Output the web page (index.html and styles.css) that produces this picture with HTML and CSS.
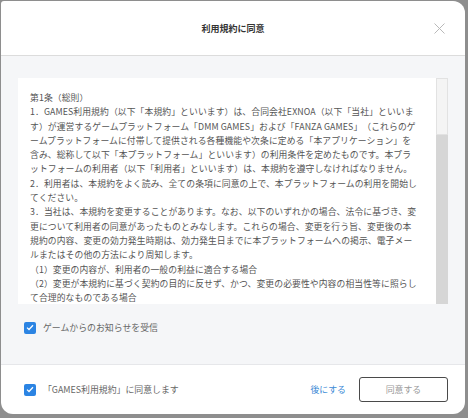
FILE: index.html
```html
<!DOCTYPE html>
<html lang="ja">
<head>
<meta charset="utf-8">
<title>利用規約に同意</title>
<link rel="stylesheet" href="styles.css">
</head>
<body>
<div class="dialog">
  <header class="dialog-header">
    <h1 class="dialog-title">利用規約に同意</h1>
    <button class="close-btn" aria-label="閉じる">
      <svg width="11" height="11" viewBox="0 0 11 11"><path d="M0.5 0.5 L10.5 10.5 M10.5 0.5 L0.5 10.5" stroke="#b9b9b9" stroke-width="1" fill="none"/></svg>
    </button>
  </header>
  <section class="dialog-body">
    <div class="terms-box">
      <div class="terms-text">
        <p>第1条（総則）</p>
        <p>1．GAMES利用規約（以下「本規約」といいます）は、合同会社EXNOA（以下「当社」といいま<br>す）が運営するゲームプラットフォーム「DMM GAMES」および「FANZA GAMES」（これらのゲ<br>ームプラットフォームに付帯して提供される各種機能や次条に定める「本アプリケーション」を<br>含み、総称して以下「本プラットフォーム」といいます）の利用条件を定めたものです。本プラ<br>ットフォームの利用者（以下「利用者」といいます）は、本規約を遵守しなければなりません。</p>
        <p>2．利用者は、本規約をよく読み、全ての条項に同意の上で、本プラットフォームの利用を開始し<br>てください。</p>
        <p>3．当社は、本規約を変更することがあります。なお、以下のいずれかの場合、法令に基づき、変<br>更について利用者の同意があったものとみなします。これらの場合、変更を行う旨、変更後の本<br>規約の内容、変更の効力発生時期は、効力発生日までに本プラットフォームへの掲示、電子メー<br>ルまたはその他の方法により周知します。</p>
        <p>（1）変更の内容が、利用者の一般の利益に適合する場合</p>
        <p>（2）変更が本規約に基づく契約の目的に反せず、かつ、変更の必要性や内容の相当性等に照らし<br>て合理的なものである場合</p>
      </div>
      <div class="scrollbar"><div class="scroll-thumb"></div></div>
    </div>
    <label class="check-row">
      <span class="checkbox"><svg width="8" height="7" viewBox="0 0 8 7"><path d="M1 3.6 L3 5.5 L7 1.3" stroke="#fff" stroke-width="1.3" fill="none"/></svg></span>
      <span class="check-label">ゲームからのお知らせを受信</span>
    </label>
  </section>
  <footer class="dialog-footer">
    <label class="check-row">
      <span class="checkbox"><svg width="8" height="7" viewBox="0 0 8 7"><path d="M1 3.6 L3 5.5 L7 1.3" stroke="#fff" stroke-width="1.3" fill="none"/></svg></span>
      <span class="check-label agree-label">「GAMES利用規約」に同意します</span>
    </label>
    <div class="actions">
      <a class="later-link">後にする</a>
      <button class="agree-btn">同意する</button>
    </div>
  </footer>
</div>
</body>
</html>
```

FILE: styles.css
```css
html, body {
  margin: 0;
  padding: 0;
}
body {
  width: 468px;
  height: 418px;
  background: #8e8e8e;
  font-family: "Noto Sans CJK JP", "Noto Sans", sans-serif;
  overflow: hidden;
}
.dialog {
  margin: 1px 0 0 1px;
  width: 464px;
  height: 413px;
  background: #fff;
  border-radius: 3px 12px 12px 12px;
  display: flex;
  flex-direction: column;
  overflow: hidden;
}
.dialog-header {
  height: 54px;
  flex: none;
  border-bottom: 1px solid #dcdcdc;
  display: flex;
  align-items: center;
  justify-content: center;
  position: relative;
}
.dialog-title {
  margin: 0;
  font-size: 9px;
  font-weight: 700;
  color: #333;
}
.close-btn {
  position: absolute;
  right: 20px;
  top: 22px;
  width: 11px;
  height: 11px;
  padding: 0;
  border: 0;
  background: none;
  display: flex;
}
.dialog-body {
  flex: 1;
  background: #f5f6f8;
  border-bottom: 1px solid #e6e7ea;
  padding: 22px 17px 0 17px;
  display: flex;
  flex-direction: column;
}
.terms-box {
  height: 226px;
  background: #fff;
  display: flex;
}
.terms-text {
  flex: 1;
  overflow: hidden;
  padding: 13px 12px 0 12px;
  font-size: 8.8px;
  line-height: 14.3px;
  color: #555;
  white-space: nowrap;
  text-spacing-trim: space-all;
  letter-spacing: 0.1px;
}
.terms-text p {
  margin: 0;
}
.scrollbar {
  width: 12px;
  flex: none;
  background: #d6d6d6;
}
.scroll-thumb {
  height: 57px;
  background: #f4f4f4;
  border: 1px solid #e2e2e2;
  box-sizing: border-box;
}
.check-row {
  display: flex;
  align-items: center;
  gap: 7px;
}
.dialog-body .check-row {
  margin: 17px 0 0 6px;
}
.checkbox {
  width: 12px;
  height: 12px;
  border-radius: 2px;
  background: #2b84e3;
  display: flex;
  align-items: center;
  justify-content: center;
  flex: none;
}
.check-label {
  font-size: 8.9px;
  color: #666;
}
.dialog-footer {
  height: 49px;
  flex: none;
  display: flex;
  align-items: center;
  justify-content: space-between;
  padding: 0 17px 0 23px;
}
.actions {
  display: flex;
  align-items: center;
  gap: 13px;
}
.later-link {
  font-size: 8.9px;
  color: #3b8ad6;
}
.agree-btn {
  width: 89px;
  height: 25px;
  border: 1px solid #4a4a4a;
  border-radius: 3px;
  background: #fff;
  font-family: inherit;
  font-size: 8.9px;
  color: #9a9a9a;
  padding: 0;
}
```
